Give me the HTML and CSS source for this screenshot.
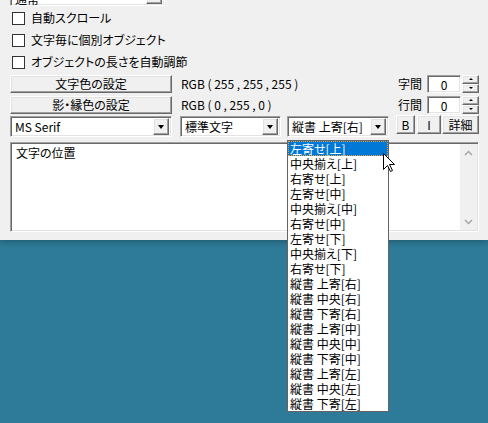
FILE: index.html
```html
<!DOCTYPE html>
<html lang="ja">
<head>
<meta charset="utf-8">
<link rel="stylesheet" href="styles.css">
</head>
<body>
<div class="win">
  <div class="combo sunken topcombo"><span class="txt">通常</span><span class="arrow raised"></span></div>
  <div class="chk first"><span class="box"></span><span>自動スクロール</span></div>
  <div class="chk"><span class="box"></span><span>文字毎に個別オブジェクト</span></div>
  <div class="chk"><span class="box"></span><span>オブジェクトの長さを自動調節</span></div>
  <div class="crow">
    <div class="btn raised wide">文字色の設定</div>
    <span class="rgb">RGB ( 255 , 255 , 255 )</span>
    <span class="lbl">字間</span>
    <div class="num sunken">0</div>
    <div class="spin"><span class="raised sup"></span><span class="raised sdn"></span></div>
  </div>
  <div class="crow">
    <div class="btn raised wide">影・縁色の設定</div>
    <span class="rgb">RGB ( 0 , 255 , 0 )</span>
    <span class="lbl">行間</span>
    <div class="num sunken">0</div>
    <div class="spin"><span class="raised sup"></span><span class="raised sdn"></span></div>
  </div>
  <div class="brow">
    <div class="combo sunken c1"><span class="txt">MS Serif</span><span class="arrow raised"></span></div>
    <div class="combo sunken c2"><span class="txt">標準文字</span><span class="arrow raised"></span></div>
    <div class="combo sunken c3"><span class="txt">縦書 上寄[右]</span><span class="arrow raised"></span></div>
    <div class="btn raised sb bb">B</div>
    <div class="btn raised sb ib">I</div>
    <div class="btn raised sb db">詳細</div>
  </div>
  <div class="edit sunken">
    <div class="etext">文字の位置</div>
    <div class="vscroll">
      <svg width="9" height="6" viewBox="0 0 9 6"><polyline points="1,5 4.5,1.5 8,5" fill="none" stroke="#a6a6a6" stroke-width="1.5"/></svg>
      <svg width="9" height="6" viewBox="0 0 9 6"><polyline points="1,1 4.5,4.5 8,1" fill="none" stroke="#a6a6a6" stroke-width="1.5"/></svg>
    </div>
  </div>
  <ul class="list">
    <li class="sel">左寄せ[上]</li>
    <li>中央揃え[上]</li>
    <li>右寄せ[上]</li>
    <li>左寄せ[中]</li>
    <li>中央揃え[中]</li>
    <li>右寄せ[中]</li>
    <li>左寄せ[下]</li>
    <li>中央揃え[下]</li>
    <li>右寄せ[下]</li>
    <li>縦書 上寄[右]</li>
    <li>縦書 中央[右]</li>
    <li>縦書 下寄[右]</li>
    <li>縦書 上寄[中]</li>
    <li>縦書 中央[中]</li>
    <li>縦書 下寄[中]</li>
    <li>縦書 上寄[左]</li>
    <li>縦書 中央[左]</li>
    <li>縦書 下寄[左]</li>
  </ul>
  <svg class="cursor" width="13" height="20" viewBox="0 0 13 20"><polygon points="0.5,0.5 0.5,16.5 4.5,12.5 7.5,18.5 9.5,17.5 6.5,11.5 11.5,11.5" fill="#fff" stroke="#000" stroke-width="1" stroke-linejoin="miter"/></svg>
</div>
</body>
</html>
```

FILE: styles.css
```css
* { box-sizing: border-box; margin: 0; padding: 0; }
html, body { width: 488px; height: 423px; overflow: hidden; }
body {
  background: #2d7b98;
  font-family: "Noto Sans CJK JP", "Noto Sans", sans-serif;
  font-size: 12px;
  line-height: 14px;
  color: #000;
  font-feature-settings: "palt";
}
.win {
  position: relative;
  height: 240px;
  background: #f0f0f0;
  display: flex;
  flex-direction: column;
  box-shadow: 0 1px 7px rgba(0, 0, 0, 0.35);
}
.sunken {
  background: #fff;
  border: 1px solid;
  border-color: #a0a0a0 #fff #fff #a0a0a0;
  box-shadow: inset 1px 1px #696969, inset -1px -1px #e3e3e3;
}
.raised {
  background: #f0f0f0;
  border: 1px solid;
  border-color: #fff #696969 #696969 #fff;
  box-shadow: inset -1px -1px #a0a0a0, inset 1px 1px #e3e3e3;
}
.combo {
  display: flex;
  align-items: center;
  height: 21px;
  padding: 2px 2px 2px 4px;
}
.combo .txt { flex: 1; white-space: nowrap; overflow: hidden; }
.arrow {
  width: 16px;
  height: 17px;
  display: flex;
  align-items: center;
  justify-content: center;
  flex: none;
}
.arrow::after {
  content: "";
  border-left: 3.5px solid transparent;
  border-right: 3.5px solid transparent;
  border-top: 4px solid #000;
}
.topcombo {
  margin: -15px 0 0 10px;
  width: 155px;
}
.topcombo .txt { padding-top: 6px; padding-left: 0; }
.chk {
  display: flex;
  align-items: center;
  height: 22px;
  padding-left: 12px;
}
.chk.first { margin-top: 1px; }
.box {
  width: 13px;
  height: 13px;
  border: 1px solid #333;
  background: #fff;
  margin-right: 6px;
}
.crow {
  display: flex;
  align-items: center;
  height: 21px;
  padding: 0 9px 0 10px;
}
.btn {
  display: flex;
  align-items: center;
  justify-content: center;
}
.wide { width: 162px; height: 18px; }
.rgb { margin-left: 9px; }
.lbl { margin-left: auto; margin-right: 5px; }
.num {
  width: 34px;
  height: 18px;
  text-align: center;
  line-height: 15px;
  padding-top: 1px;
}
.spin {
  display: flex;
  flex-direction: column;
  margin-left: 1px;
}
.spin span {
  width: 17px;
  height: 9px;
  display: flex;
  align-items: center;
  justify-content: center;
}
.sup::after {
  content: "";
  border-left: 2px solid transparent;
  border-right: 2px solid transparent;
  border-bottom: 2px solid #000;
}
.sdn::after {
  content: "";
  border-left: 2px solid transparent;
  border-right: 2px solid transparent;
  border-top: 2px solid #000;
}
.brow {
  display: flex;
  align-items: flex-start;
  margin-top: 1px;
  padding-left: 10px;
  height: 21px;
}
.c1 { width: 162px; margin-right: 8px; }
.c2 { width: 101px; margin-right: 6px; }
.c3 { width: 102px; margin-right: 7px; }
.sb { height: 19px; margin-top: -1px; }
.bb { width: 19px; margin-right: 2px; }
.ib { width: 24px; margin-right: 1px; }
.db { width: 37px; }
.edit {
  margin: 5px 9px 0 10px;
  height: 90px;
  display: flex;
  padding: 1px;
}
.etext {
  flex: 1;
  padding: 2px 0 0 4px;
}
.vscroll {
  width: 17px;
  background: #f0f0f0;
  display: flex;
  flex-direction: column;
  justify-content: space-between;
  align-items: center;
  padding: 6px 0 5px;
}
.list {
  position: absolute;
  left: 287px;
  top: 140px;
  width: 102px;
  height: 272px;
  background: #fff;
  border: 1px solid #646464;
  list-style: none;
}
.list li {
  height: 15px;
  line-height: 15px;
  padding-left: 2px;
  white-space: nowrap;
}
.list li.sel {
  background: #0078d7;
  color: #fff;
  outline: 1px dotted #f2a23a;
  outline-offset: -1px;
}
.cursor {
  position: absolute;
  left: 383px;
  top: 153px;
}
```
